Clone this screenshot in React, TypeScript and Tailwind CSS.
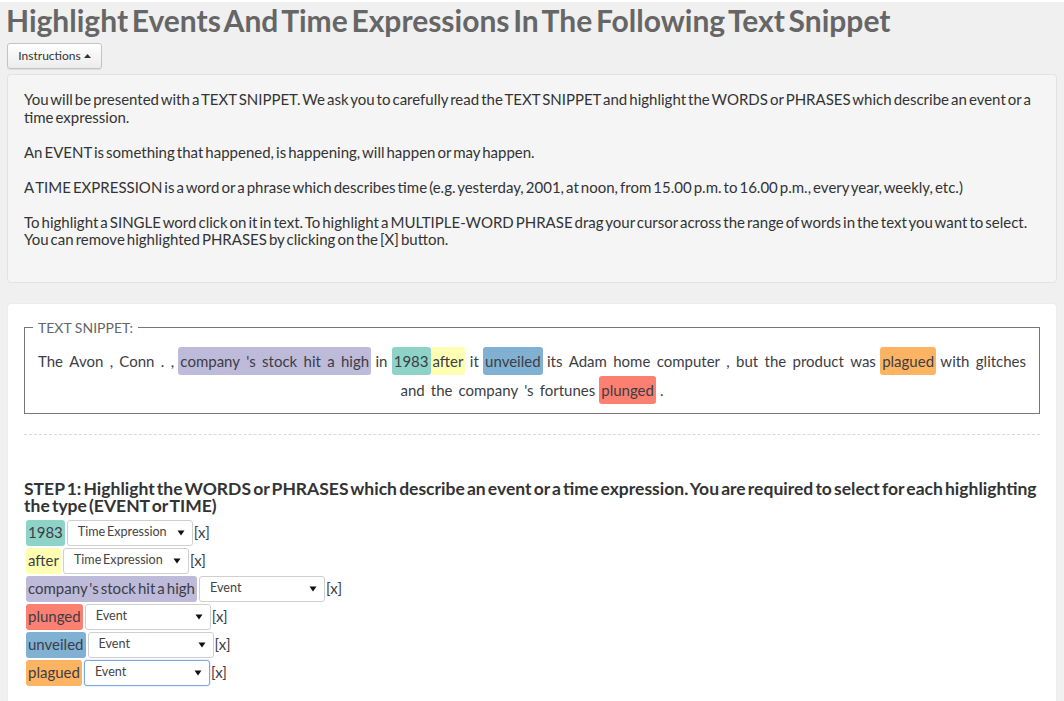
import React from "react";

type Token = { text: string; color?: string; glue?: boolean };

const SNIPPET: Token[] = [
  { text: "The" },
  { text: "Avon" },
  { text: "," },
  { text: "Conn" },
  { text: "." },
  { text: "," },
  { text: "company 's stock hit a high", color: "#bebada" },
  { text: "in" },
  { text: "1983", color: "#8dd3c7", glue: true },
  { text: "after", color: "#ffffb3" },
  { text: "it" },
  { text: "unveiled", color: "#80b1d3" },
  { text: "its" },
  { text: "Adam" },
  { text: "home" },
  { text: "computer" },
  { text: "," },
  { text: "but" },
  { text: "the" },
  { text: "product" },
  { text: "was" },
  { text: "plagued", color: "#fdb462" },
  { text: "with" },
  { text: "glitches" },
  { text: "and" },
  { text: "the" },
  { text: "company" },
  { text: "'s" },
  { text: "fortunes" },
  { text: "plunged", color: "#fb8072" },
  { text: "." },
];

const SELECTIONS = [
  { text: "1983", color: "#8dd3c7", type: "Time Expression" },
  { text: "after", color: "#ffffb3", type: "Time Expression" },
  { text: "company 's stock hit a high", color: "#bebada", type: "Event" },
  { text: "plunged", color: "#fb8072", type: "Event" },
  { text: "unveiled", color: "#80b1d3", type: "Event" },
  { text: "plagued", color: "#fdb462", type: "Event", focused: true },
];

function FakeSelect({ value, focused }: { value: string; focused?: boolean }) {
  return (
    <div
      className={
        focused
          ? "ml-[2px] flex h-[26px] w-[126px] items-center justify-between rounded-[3px] border border-[#7fa8e2] bg-white pl-[10px] pr-[6px] text-[12.6px] text-[#444] shadow-[0_0_2px_rgba(102,150,230,0.5)] [word-spacing:-0.12em]"
          : "ml-[2px] flex h-[26px] w-[126px] items-center justify-between rounded-[3px] border border-[#cfcfcf] bg-white pl-[10px] pr-[6px] text-[12.6px] text-[#444] [word-spacing:-0.12em]"
      }
    >
      <span>{value}</span>
      <svg width="8" height="6" viewBox="0 0 8 6" className="mr-[1px]">
        <path d="M0.5 0.5 H7.5 L4 5.5 Z" fill="#111" />
      </svg>
    </div>
  );
}

// each word of the snippet is its own padded span; a highlight wraps the words it covers
function Word({ text }: { text: string }) {
  return <span className="px-[2px]">{text}</span>;
}

export default function App() {
  return (
    <div className="min-h-[701px] bg-[#f0f0f0] px-[7px] font-[Lato,sans-serif] text-[#333]">
      <h1 className="ml-[-1px] mt-[2px] text-[30px] font-bold leading-[36px] text-[#666] [word-spacing:-0.12em]">
        Highlight Events And Time Expressions In The Following Text Snippet
      </h1>

      <button className="mt-[5px] flex h-[26px] w-[95px] items-center justify-center gap-[3px] rounded-[3px] border border-[#c4c4c4] bg-gradient-to-b from-white to-[#ececec] text-[12px] text-[#333] shadow-[0_1px_1px_rgba(0,0,0,0.08)]">
        Instructions
        <svg width="7" height="4" viewBox="0 0 7 4">
          <path d="M0 4 L3.5 0 L7 4 Z" fill="#333" />
        </svg>
      </button>

      <div className="mt-[5px] rounded-[4px] border border-[#e2e2e2] bg-[#f5f5f5] px-[16px] pb-[33px] pt-[16px] text-[15px] leading-[17.5px] text-[#333] [word-spacing:-0.12em]">
        You will be presented with a TEXT SNIPPET. We ask you to carefully read the TEXT SNIPPET and
        highlight the WORDS or PHRASES which describe an event or a time expression.
        <br />
        <br />
        An EVENT is something that happened, is happening, will happen or may happen.
        <br />
        <br />
        A TIME EXPRESSION is a word or a phrase which describes time (e.g. yesterday, 2001, at noon,
        from 15.00 p.m. to 16.00 p.m., every year, weekly, etc.)
        <br />
        <br />
        To highlight a SINGLE word click on it in text. To highlight a MULTIPLE-WORD PHRASE drag your
        cursor across the range of words in the text you want to select. You can remove highlighted
        PHRASES by clicking on the [X] button.
      </div>

      <div className="mt-[20px] rounded-[4px] border border-[#ececec] bg-white px-[16px] pb-[30px] pt-[15px]">
        <fieldset className="border border-[#777] px-[11px] pb-[8px] pt-[11px]">
          <legend className="ml-[-3px] px-[5px] text-[14px] leading-[17px] text-[#666]">
            TEXT SNIPPET:
          </legend>
          <p className="text-justify text-[15px] leading-[29px] text-[#3d3d45] [text-align-last:center] [word-spacing:-0.12em]">
            {SNIPPET.map((tok, i) => {
              const words = tok.text.split(" ");
              return (
                <React.Fragment key={i}>
                  {tok.color ? (
                    <span className="rounded-[3px] py-[5px]" style={{ backgroundColor: tok.color }}>
                      {words.map((w, j) => (
                        <React.Fragment key={j}>
                          <Word text={w} />
                          {j < words.length - 1 ? " " : null}
                        </React.Fragment>
                      ))}
                    </span>
                  ) : (
                    <Word text={tok.text} />
                  )}
                  {!tok.glue && i < SNIPPET.length - 1 ? " " : null}
                </React.Fragment>
              );
            })}
          </p>
        </fieldset>

        <div className="mt-[20px] border-t border-dashed border-[#dcdad0]" />

        <h4 className="mt-[45px] text-[17.5px] font-bold leading-[17px] text-[#333] [word-spacing:-0.12em]">
          STEP 1: Highlight the WORDS or PHRASES which describe an event or a time expression. You are
          required to select for each highlighting the type (EVENT or TIME)
        </h4>

        <div className="mt-[6px] flex flex-col gap-[2px] pl-[2px]">
          {SELECTIONS.map((sel) => (
            <div key={sel.text} className="flex h-[26px] items-center text-[15px] [word-spacing:-0.12em]">
              <span
                className="flex h-[26px] items-center rounded-[3px] px-[2px] text-[#3d3d45]"
                style={{ backgroundColor: sel.color }}
              >
                {sel.text}
              </span>
              <FakeSelect value={sel.type} focused={sel.focused} />
              <span className="ml-[1px] text-[#3d3d45]">[x]</span>
            </div>
          ))}
        </div>
      </div>
    </div>
  );
}
